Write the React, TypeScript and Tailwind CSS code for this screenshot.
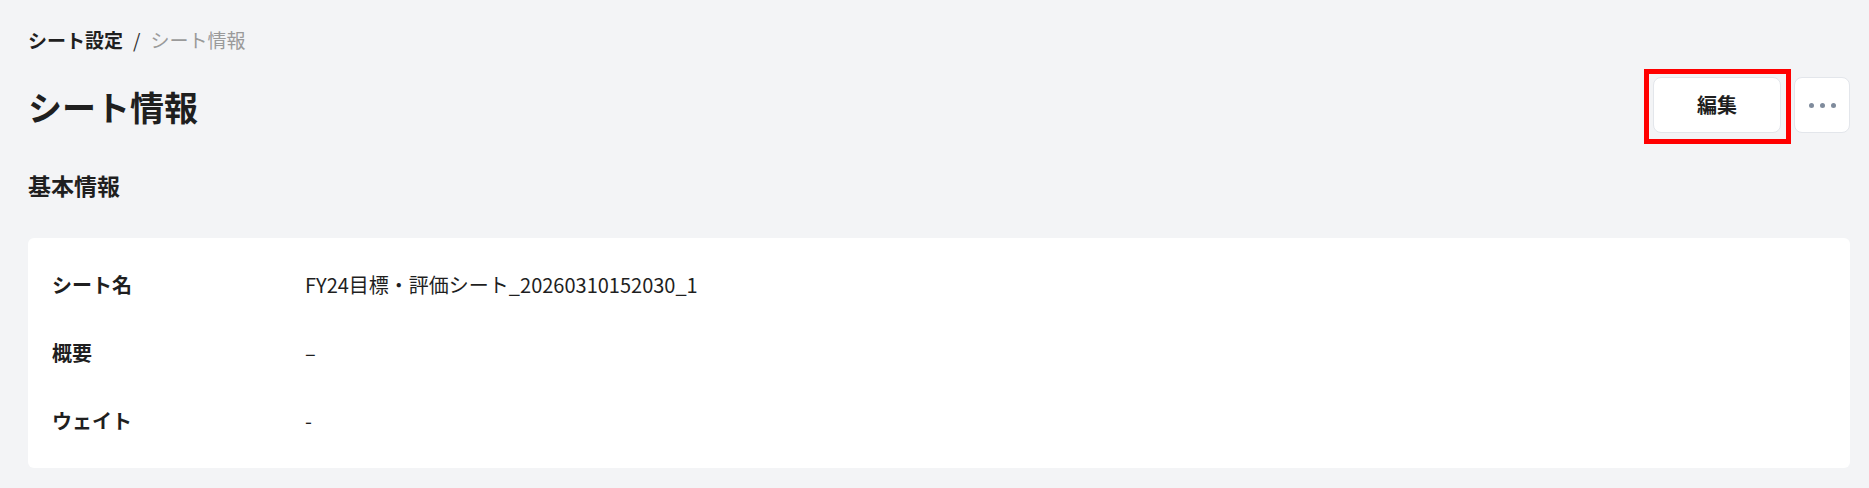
import React from 'react'

const rows = [
  { label: 'シート名', value: 'FY24目標・評価シート_20260310152030_1' },
  { label: '概要', value: '–' },
  { label: 'ウェイト', value: '-' },
]

const App = () => {
  return (
    <div className="min-h-screen bg-[#f3f4f6] pt-[26px] pl-[28px] pr-[19px] text-[#1f1f1f] font-['Noto_Sans_CJK_JP',sans-serif]">
      <div className="flex items-center h-[27px] text-[19px] leading-[27px]">
        <span className="font-bold">シート設定</span>
        <span className="mx-[10px] text-[#333]">/</span>
        <span className="text-[#9a9a9a]">シート情報</span>
      </div>

      <div className="mt-[24px] flex items-center justify-between h-[56px]">
        <h1 className="mt-[3px] text-[34px] leading-[48px] font-bold">シート情報</h1>
        <div className="flex items-center gap-[13px]">
          <div className="relative">
            <button className="w-[128px] h-[56px] rounded-[8px] border border-[#e3e6eb] bg-white text-[20px] font-bold">
              編集
            </button>
            <span className="pointer-events-none absolute -top-[8px] -bottom-[11px] -left-[9px] -right-[10px] border-[5px] border-[#ff0000]" />
          </div>
          <button className="w-[56px] h-[56px] rounded-[8px] border border-[#e3e6eb] bg-white flex items-center justify-center gap-[6px]">
            <span className="w-[5px] h-[5px] rounded-full bg-[#7f8b9c]" />
            <span className="w-[5px] h-[5px] rounded-full bg-[#7f8b9c]" />
            <span className="w-[5px] h-[5px] rounded-full bg-[#7f8b9c]" />
          </button>
        </div>
      </div>

      <h2 className="mt-[36px] text-[23px] leading-[32px] font-bold">基本情報</h2>

      <div className="mt-[37px] rounded-[6px] bg-white px-[24px] py-[13px]">
        {rows.map((r) => (
          <div key={r.label} className="flex items-center h-[68px]">
            <div className="w-[253px] text-[20px] font-bold">{r.label}</div>
            <div className="text-[20px]">{r.value}</div>
          </div>
        ))}
      </div>
    </div>
  )
}

export default App
